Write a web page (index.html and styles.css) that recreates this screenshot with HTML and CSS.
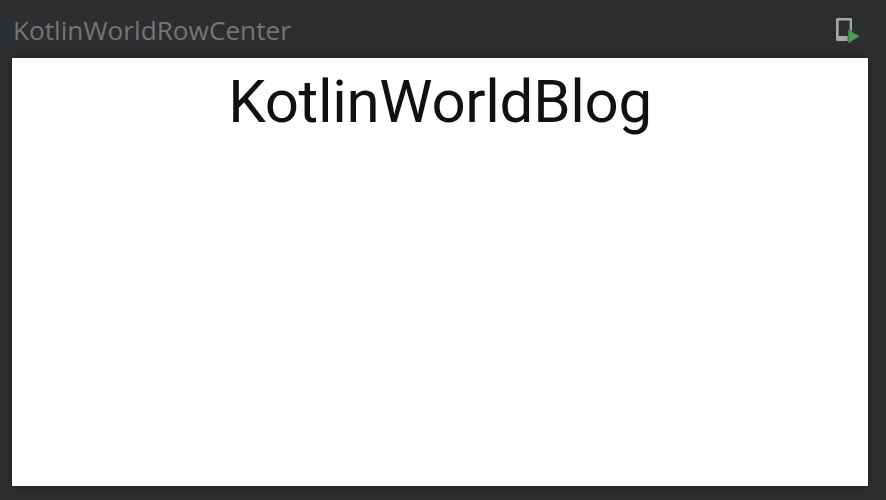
FILE: index.html
```html
<!DOCTYPE html>
<html lang="en">
<head>
  <meta charset="UTF-8" />
  <title>KotlinWorldRowCenter</title>
  <link rel="stylesheet" href="styles.css">
</head>
<body>

  <div class="header">
    <span class="title">KotlinWorldRowCenter</span>
    <svg class="run-icon" width="26" height="28" viewBox="0 0 26 28">
      <path fill-rule="evenodd" d="M3.500 2h13A1.500 1.500 0 0 1 18 3.500v20a1.500 1.500 0 0 1-1.500 1.500h-13A1.500 1.500 0 0 1 2 23.500v-20A1.500 1.500 0 0 1 3.500 2zM4.700 4.500V20H15.700V4.500z" fill="#a4a6a8" />
      <path d="M14 13l12 7.300-12 7.500z" fill="#499c54" stroke="#2d2e30" stroke-width="0.6" />
    </svg>
  </div>

  <div class="preview">
    <div class="row">
      <span class="blog-text">KotlinWorldBlog</span>
    </div>
  </div>

</body>
</html>
```

FILE: styles.css
```css
* {
  box-sizing: border-box;
}

body {
  margin: 0;
  height: 500px;
  overflow: hidden;
  background: #2d2e30;
  font-family: 'Open Sans', sans-serif;
}

.header {
  height: 58px;
  padding: 12px 12px 0 13px;
  display: flex;
  justify-content: space-between;
  align-items: flex-start;
}

.title {
  font-size: 26.2px;
  line-height: 36px;
  color: #737577;
}

.run-icon {
  margin-top: 4px;
  margin-right: 14px;
}

.preview {
  margin-left: 12px;
  width: 856px;
  height: 428px;
  background: #fff;
  box-shadow: 0 0 8px rgba(0,0,0,0.35);
}

.row {
  display: flex;
  justify-content: center;
}

.blog-text {
  font-family: Roboto, sans-serif;
  font-size: 60px;
  letter-spacing: -0.3px;
  line-height: 88px;
  color: #111;
}
```
